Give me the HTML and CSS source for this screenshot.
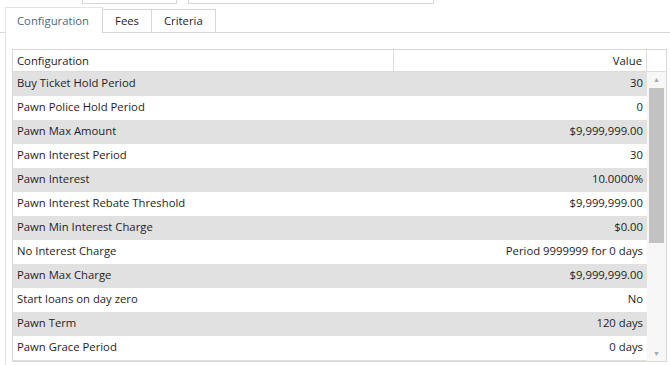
FILE: index.html
```html
<!DOCTYPE html>
<html lang="en">
<head>
    <meta charset="UTF-8">
    <title>Configuration</title>
    <link rel="stylesheet" href="styles.css">
</head>
<body>
    <div class="top-bar">
        <div class="field field-short"></div>
        <div class="field field-long"></div>
    </div>

    <ul class="tabs">
        <li class="tab active">Configuration</li>
        <li class="tab">Fees</li>
        <li class="tab">Criteria</li>
    </ul>

    <div class="panel">
        <div class="grid">
            <div class="grid-head">
                <div class="col-name">Configuration</div>
                <div class="col-value">Value</div>
                <div class="col-scroll"></div>
            </div>
            <div class="grid-body">
                <div class="rows" id="rows"></div>
                <div class="scrollbar">
                    <span class="arrow">&#9650;</span>
                    <div class="thumb"></div>
                    <div class="track"></div>
                    <span class="arrow">&#9660;</span>
                </div>
            </div>
        </div>
    </div>

    <script src="script.js"></script>
</body>
</html>
```

FILE: styles.css
```css
body {
    margin: 0;
    font-family: "Open Sans", "Noto Sans", Arial, sans-serif;
    font-size: 11.3px;
    color: #1e1e1e;
    background-color: white;
    width: 670px;
    height: 365px;
    overflow: hidden;
}
.top-bar {
    height: 4px;
    overflow: hidden;
    display: flex;
    align-items: flex-end;
}
.field {
    height: 24px;
    border: 1px solid #d6d6d6;
    box-sizing: border-box;
    flex-shrink: 0;
    background-color: white;
}
.field-short {
    width: 95px;
    margin-left: 82px;
}
.field-long {
    width: 246px;
    margin-left: 11px;
}
.tabs {
    list-style: none;
    margin: 2px 0 0 0;
    padding: 0 0 0 5px;
    display: flex;
    align-items: flex-end;
    border-bottom: 1px solid #d6d6d6;
    height: 26px;
}
.tab {
    border: 1px solid #d6d6d6;
    border-bottom: none;
    height: 23px;
    line-height: 21px;
    padding: 0 12px;
    margin-left: -1px;
    box-sizing: border-box;
    background-color: white;
}
.tab:first-child {
    margin-left: 0;
}
.tab.active {
    height: 26px;
    margin-bottom: -1px;
    color: #4d6782;
    padding: 0 13px 0 11px;
    line-height: 25px;
    border-color: #e3e3e3;
    border-right-color: #d6d6d6;
}
.panel {
    margin-left: 5px;
    border-left: 1px solid #e0e0e0;
    padding: 16px 0 0 6px;
    height: 332px;
    box-sizing: border-box;
}
.grid {
    width: 655px;
    border: 1px solid #d8d8d8;
    box-sizing: border-box;
    height: 313px;
    overflow: hidden;
}
.grid-head {
    display: flex;
    height: 22px;
    border-bottom: 1px solid #dcdcdc;
    box-sizing: border-box;
    background-color: white;
}
.col-name {
    width: 376px;
    border-right: 1px solid #dcdcdc;
    padding-left: 4px;
    line-height: 22px;
}
.col-value {
    flex: 1;
    text-align: right;
    padding-right: 4px;
    line-height: 22px;
    border-right: 1px solid #dcdcdc;
}
.col-scroll {
    width: 19px;
}
.grid-body {
    display: flex;
}
.rows {
    flex: 1;
}
.row {
    display: flex;
    height: 24px;
    line-height: 21px;
}
.row:nth-child(odd) {
    background-color: #e1e1e1;
}
.row-name {
    flex: 1;
    padding-left: 4px;
}
.row-value {
    padding-right: 4px;
}
.scrollbar {
    width: 19px;
    display: flex;
    flex-direction: column;
    align-items: center;
    background-color: #f7f7f7;
    height: 290px;
}
.arrow {
    font-size: 7px;
    color: #a6a6a6;
    height: 16px;
    line-height: 16px;
}
.thumb {
    width: 15px;
    height: 155px;
    background-color: #c2c2c2;
}
.track {
    flex: 1;
}
```

FILE: script.js
```js
const settings = [
    ['Buy Ticket Hold Period', '30'],
    ['Pawn Police Hold Period', '0'],
    ['Pawn Max Amount', '$9,999,999.00'],
    ['Pawn Interest Period', '30'],
    ['Pawn Interest', '10.0000%'],
    ['Pawn Interest Rebate Threshold', '$9,999,999.00'],
    ['Pawn Min Interest Charge', '$0.00'],
    ['No Interest Charge', 'Period 9999999 for 0 days'],
    ['Pawn Max Charge', '$9,999,999.00'],
    ['Start loans on day zero', 'No'],
    ['Pawn Term', '120 days'],
    ['Pawn Grace Period', '0 days'],
    ['', '']
];

const rows = document.getElementById('rows');
settings.forEach(([name, value]) => {
    const row = document.createElement('div');
    row.className = 'row';
    row.innerHTML = `<div class="row-name">${name}</div><div class="row-value">${value}</div>`;
    rows.appendChild(row);
});
```
